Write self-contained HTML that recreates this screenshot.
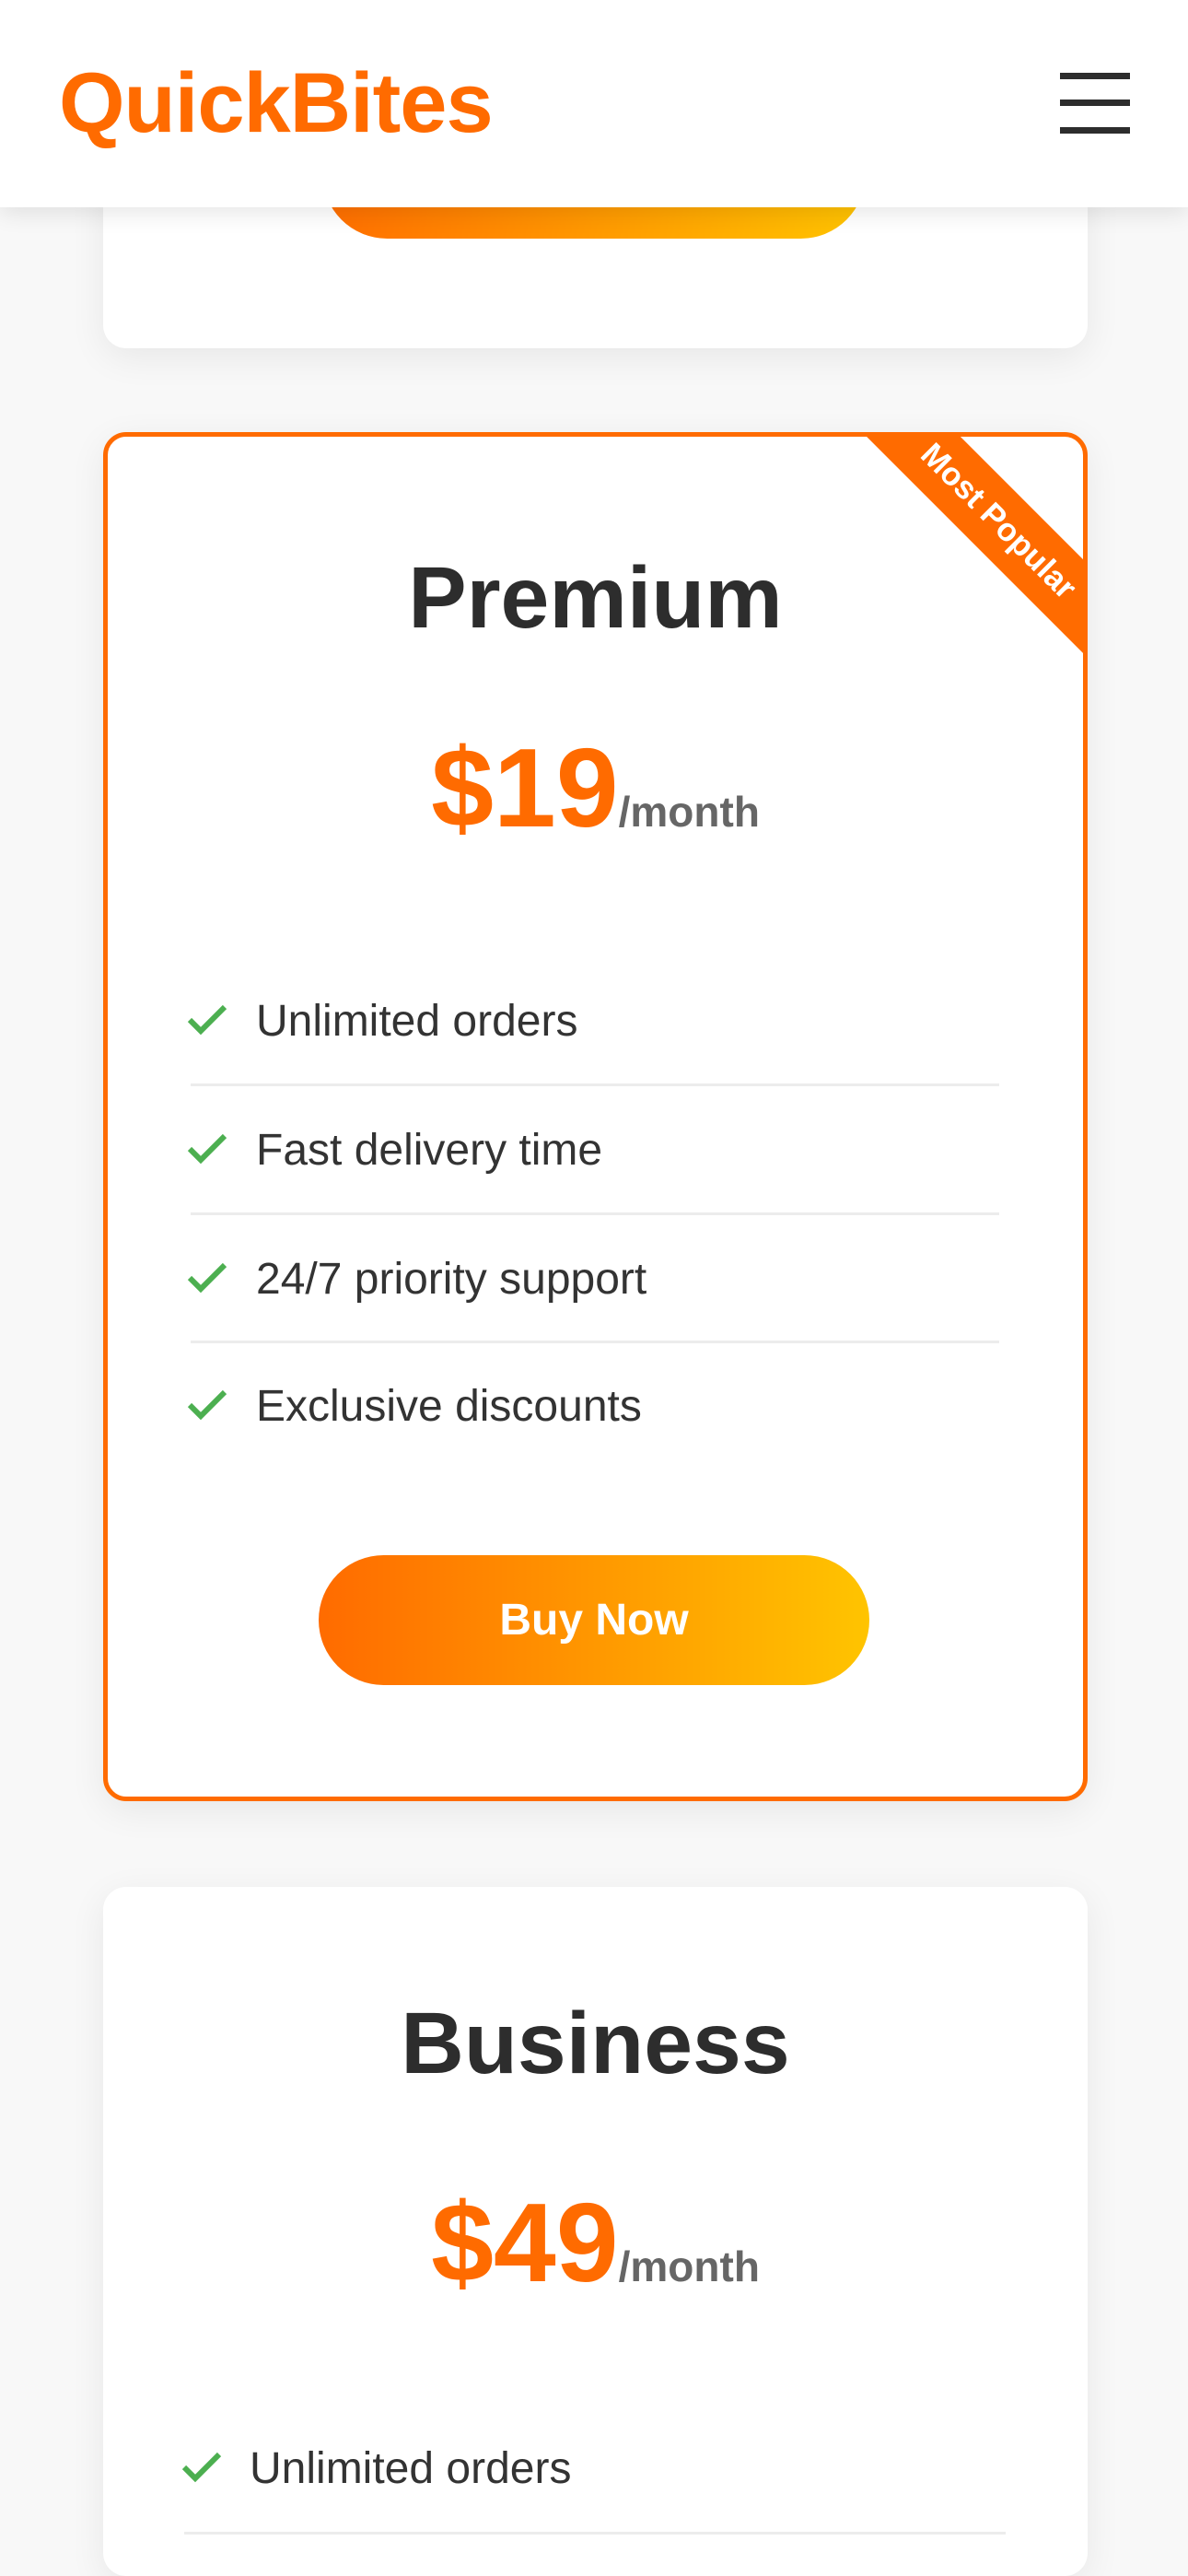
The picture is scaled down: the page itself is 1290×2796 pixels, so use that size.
<!DOCTYPE html>
<html><head><meta charset="utf-8"><style>
*{box-sizing:border-box;margin:0;padding:0}
html,body{width:1290px;height:2796px;overflow:hidden;background:#f8f8f8;font-family:"Liberation Sans",sans-serif;position:relative}
.hdr{position:absolute;left:0;top:0;width:1290px;height:225px;background:#fff;box-shadow:0 6px 24px rgba(0,0,0,.1);z-index:10}
.logo{position:absolute;left:64px;top:66px;font-size:92px;font-weight:bold;color:#ff6b00;letter-spacing:-1px;line-height:1}
.bar{position:absolute;left:1151px;width:76px;height:7px;background:#2d2d2d}
.card{position:absolute;left:112px;width:1069px;background:#fff;border-radius:25px;box-shadow:0 10px 40px rgba(0,0,0,.07);overflow:hidden}
.btn{position:absolute;height:141px;border-radius:71px;background:linear-gradient(90deg,#ff6b00,#ffc400);color:#fff;font-weight:bold;font-size:48px;text-align:center;line-height:141px}
.title{position:absolute;left:0;width:100%;text-align:center;font-size:95px;font-weight:bold;color:#2d2d2d;line-height:1}
.price{position:absolute;left:0;width:100%;text-align:center;color:#ff6b00;font-weight:bold;font-size:122px;line-height:1}
.price span{font-size:46px;color:#666}
.feat{position:absolute;font-size:48px;color:#333;line-height:1}
.chk{position:absolute;width:44px;height:34px}
.div{position:absolute;height:3px;background:#ececec}
</style></head><body>
<div class="hdr"><div class="logo">QuickBites</div>
<div class="bar" style="top:79px"></div><div class="bar" style="top:108px"></div><div class="bar" style="top:138px"></div></div>

<div class="card" style="top:0;height:378px"><div class="btn" style="left:238px;top:118px;width:590px;background:linear-gradient(100deg,#ff6b00,#ffc400)"></div></div>

<div class="card" style="top:469px;height:1486px;border:5px solid #ff6b00">
<div style="position:absolute;left:767px;top:56px;width:400px;height:72px;background:#ff6b00;transform:rotate(45deg);color:#fff;font-weight:bold;font-size:35px;text-align:center;line-height:72px">Most Popular</div>
<div class="title" style="top:128px">Premium</div>
<div class="price" style="top:320px">$19<span>/month</span></div>
<svg class="chk" style="left:86px;top:616px" viewBox="0 0 44 34"><path d="M3 17l12 12L41 3" fill="none" stroke="#4caf50" stroke-width="6"/></svg>
<div class="feat" style="left:161px;top:611px">Unlimited orders</div>
<div class="div" style="left:90px;top:702px;width:878px"></div>
<svg class="chk" style="left:86px;top:756px" viewBox="0 0 44 34"><path d="M3 17l12 12L41 3" fill="none" stroke="#4caf50" stroke-width="6"/></svg>
<div class="feat" style="left:161px;top:751px">Fast delivery time</div>
<div class="div" style="left:90px;top:842px;width:878px"></div>
<svg class="chk" style="left:86px;top:896px" viewBox="0 0 44 34"><path d="M3 17l12 12L41 3" fill="none" stroke="#4caf50" stroke-width="6"/></svg>
<div class="feat" style="left:161px;top:891px">24/7 priority support</div>
<div class="div" style="left:90px;top:981px;width:878px"></div>
<svg class="chk" style="left:86px;top:1034px" viewBox="0 0 44 34"><path d="M3 17l12 12L41 3" fill="none" stroke="#4caf50" stroke-width="6"/></svg>
<div class="feat" style="left:161px;top:1029px">Exclusive discounts</div>
<div class="btn" style="left:229px;top:1214px;width:598px">Buy Now</div>
</div>

<div class="card" style="top:2048px;height:748px">
<div class="title" style="top:123px">Business</div>
<div class="price" style="top:325px">$49<span>/month</span></div>
<svg class="chk" style="left:85px;top:613px" viewBox="0 0 44 34"><path d="M3 17l12 12L41 3" fill="none" stroke="#4caf50" stroke-width="6"/></svg>
<div class="feat" style="left:159px;top:608px">Unlimited orders</div>
<div class="div" style="left:88px;top:700px;width:892px"></div>
</div>
</body></html>
